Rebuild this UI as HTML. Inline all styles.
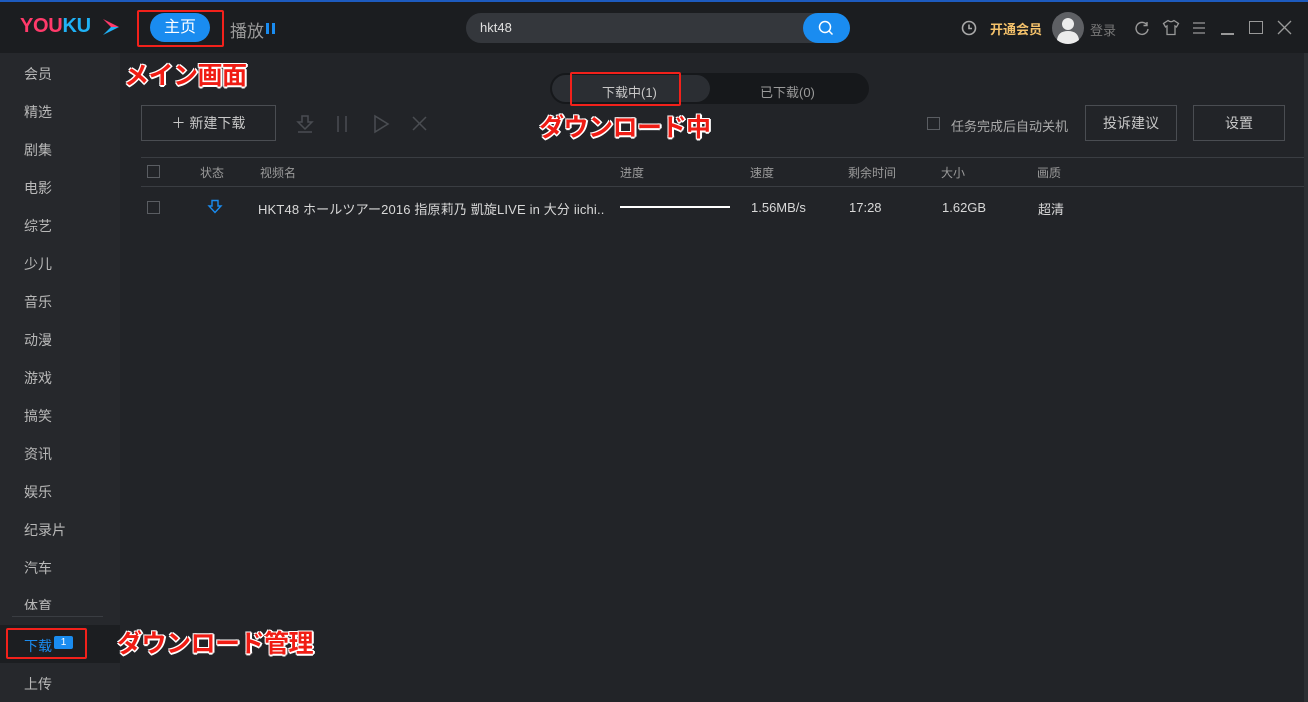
<!DOCTYPE html>
<html><head><meta charset="utf-8"><style>
*{margin:0;padding:0;box-sizing:border-box}
body{width:1308px;height:702px;overflow:hidden;background:#222428;font-family:"Liberation Sans","Noto Sans CJK SC",sans-serif;color:#c8c8c8;position:relative}
.a{position:absolute;white-space:nowrap}
.top{left:0;top:0;width:1308px;height:53px;background:#1b1d20;border-top:2px solid #1d5bbf}
.side{left:0;top:53px;width:120px;height:649px;background:#26282c}
.si{position:absolute;left:24px;font-size:14px;color:#b8b8b8}
.red{position:absolute;border:2px solid #f2211b;border-radius:2px}
.ann{position:absolute;font-size:25px;font-weight:bold;color:#f01c14;font-family:"Noto Sans CJK JP",sans-serif;text-shadow:-1px -1px 0 #fff,1px -1px 0 #fff,-1px 1px 0 #fff,1px 1px 0 #fff,0 2px 0 #fff,2px 0 0 #fff;white-space:nowrap;letter-spacing:-0.5px;line-height:30px}
.btn{position:absolute;border:1px solid #4a4d52;font-size:14px;color:#c8c8c8;text-align:center}
.hd{font-size:12px;color:#9a9a9a;top:164px}
.cb{position:absolute;width:13px;height:13px;border:1px solid #5a5d62}
.row{font-size:13px;color:#d8d8d8;top:200px}
</style></head><body>
<div class="a top"></div>
<div class="a" style="left:20px;top:15px;font-size:20px;font-weight:bold;letter-spacing:-0.3px"><span style="color:#ff3a6a">YOU</span><span style="color:#1fb2f6">KU</span></div>
<svg class="a" style="left:101px;top:17px" width="20" height="20" viewBox="0 0 20 20"><path d="M2 2 L18 10 L10 10 Z" fill="#ff3a6a"/><path d="M10 10 L18 10 L2 18 Z" fill="#1fb2f6"/></svg>
<div class="a" style="left:150px;top:13px;width:60px;height:29px;border-radius:15px;background:#1a8cf0;color:#fff;font-size:16px;text-align:center;line-height:29px">主页</div>
<div class="red" style="left:137px;top:10px;width:87px;height:37px"></div>
<div class="a" style="left:230px;top:17px;font-size:17px;color:#9a9a9a">播放</div>
<div class="a" style="left:266px;top:23px;width:3px;height:11px;background:#1a8cf0"></div>
<div class="a" style="left:272px;top:23px;width:3px;height:11px;background:#1a8cf0"></div>
<div class="a" style="left:466px;top:13px;width:384px;height:30px;border-radius:15px;background:#34373c"></div>
<div class="a" style="left:480px;top:20px;font-size:13px;color:#e0e0e0">hkt48</div>
<div class="a" style="left:803px;top:13px;width:47px;height:30px;border-radius:15px;background:#1a8cf0"></div>
<svg class="a" style="left:818px;top:20px" width="16" height="16"><circle cx="7" cy="7" r="5.5" stroke="#fff" stroke-width="1.5" fill="none"/><path d="M11 11 L14.5 14.5" stroke="#fff" stroke-width="1.5"/></svg>
<svg class="a" style="left:961px;top:20px" width="16" height="16"><circle cx="8" cy="8" r="6.5" stroke="#aaa" stroke-width="1.6" fill="none"/><path d="M8 4.5 V8.5 H11" stroke="#aaa" stroke-width="1.6" fill="none"/></svg>
<div class="a" style="left:990px;top:19px;font-size:13px;font-weight:bold;color:#f5c26b">开通会员</div>
<svg class="a" style="left:1052px;top:12px" width="32" height="32"><circle cx="16" cy="16" r="16" fill="#5e6064"/><circle cx="16" cy="12" r="6" fill="#ececec"/><path d="M5 28 Q6 19 16 19 Q26 19 27 28 Q22 32 16 32 Q10 32 5 28Z" fill="#ececec"/></svg>
<div class="a" style="left:1090px;top:20px;font-size:13px;color:#777">登录</div>
<svg class="a" style="left:1134px;top:20px" width="16" height="16"><path d="M13 5 A6 6 0 1 0 14 9" stroke="#999" stroke-width="1.4" fill="none"/><path d="M13 2 V5.5 H9.5" stroke="#999" stroke-width="1.4" fill="none"/></svg>
<svg class="a" style="left:1162px;top:19px" width="18" height="17"><path d="M6 1.5 L1.5 4.5 L3.5 8 L5 7 V15.5 H13 V7 L14.5 8 L16.5 4.5 L12 1.5 Q9 4 6 1.5Z" stroke="#999" stroke-width="1.3" fill="none"/></svg>
<svg class="a" style="left:1191px;top:20px" width="16" height="16"><path d="M2 3H14M2 8H14M2 13H14" stroke="#999" stroke-width="1.3"/></svg>
<div class="a" style="left:1221px;top:33px;width:13px;height:1.5px;background:#999"></div>
<div class="a" style="left:1249px;top:21px;width:14px;height:13px;border:1.5px solid #999"></div>
<svg class="a" style="left:1277px;top:20px" width="15" height="15"><path d="M1 1L14 14M14 1L1 14" stroke="#999" stroke-width="1.3"/></svg>
<div class="a" style="left:1304px;top:53px;width:4px;height:649px;background:#2c2f33"></div>

<div class="a side"></div>
<div class="si" style="top:64px">会员</div>
<div class="si" style="top:102px">精选</div>
<div class="si" style="top:140px">剧集</div>
<div class="si" style="top:178px">电影</div>
<div class="si" style="top:216px">综艺</div>
<div class="si" style="top:254px">少儿</div>
<div class="si" style="top:292px">音乐</div>
<div class="si" style="top:330px">动漫</div>
<div class="si" style="top:368px">游戏</div>
<div class="si" style="top:406px">搞笑</div>
<div class="si" style="top:444px">资讯</div>
<div class="si" style="top:482px">娱乐</div>
<div class="si" style="top:520px">纪录片</div>
<div class="si" style="top:558px">汽车</div>
<div class="si" style="top:596px;height:14px;overflow:hidden">体育</div>
<div class="a" style="left:12px;top:616px;width:91px;height:1px;background:#3a3d42"></div>
<div class="a" style="left:0;top:625px;width:120px;height:38px;background:#1c1e21"></div>
<div class="si" style="top:636px;color:#1a8cf0">下载</div>
<div class="a" style="left:54px;top:636px;width:19px;height:13px;background:#1a8cf0;border-radius:2px;color:#fff;font-size:10px;text-align:center;line-height:13px">1</div>
<div class="red" style="left:6px;top:628px;width:81px;height:31px"></div>
<div class="si" style="top:674px">上传</div>
<div class="ann" style="left:117px;top:627px">ダウンロード管理</div>
<div class="ann" style="left:124px;top:59px">メイン画面</div>

<div class="a" style="left:550px;top:73px;width:319px;height:31px;border-radius:16px;background:#16181b"></div>
<div class="a" style="left:552px;top:75px;width:158px;height:27px;border-radius:14px;background:#2b2e33"></div>
<div class="a" style="left:602px;top:82px;font-size:13px;color:#c8c8c8">下载中(1)</div>
<div class="a" style="left:760px;top:82px;font-size:13px;color:#9a9a9a">已下载(0)</div>
<div class="red" style="left:570px;top:72px;width:111px;height:34px"></div>
<div class="ann" style="left:539px;top:111px">ダウンロード中</div>

<div class="btn" style="left:141px;top:105px;width:135px;height:36px;line-height:34px">＋ 新建下载</div>
<svg class="a" style="left:295px;top:114px" width="20" height="20"><path d="M7 2H13V8H17L10 15L3 8H7Z" stroke="#4a4d52" stroke-width="1.5" fill="none"/><path d="M3 18H17" stroke="#4a4d52" stroke-width="1.5"/></svg>
<svg class="a" style="left:334px;top:114px" width="16" height="20"><path d="M4 2V18M12 2V18" stroke="#4a4d52" stroke-width="1.5"/></svg>
<svg class="a" style="left:372px;top:114px" width="18" height="20"><path d="M3 2L16 10L3 18Z" stroke="#4a4d52" stroke-width="1.5" fill="none"/></svg>
<svg class="a" style="left:411px;top:115px" width="18" height="18"><path d="M2 2L15 15M15 2L2 15" stroke="#4a4d52" stroke-width="1.5"/></svg>
<div class="cb" style="left:927px;top:117px"></div>
<div class="a" style="left:951px;top:116px;font-size:13px;color:#aaa">任务完成后自动关机</div>
<div class="btn" style="left:1085px;top:105px;width:92px;height:36px;line-height:34px">投诉建议</div>
<div class="btn" style="left:1193px;top:105px;width:92px;height:36px;line-height:34px">设置</div>

<div class="a" style="left:141px;top:157px;width:1163px;height:1px;background:#3a3d42"></div>
<div class="a" style="left:141px;top:186px;width:1163px;height:1px;background:#3a3d42"></div>
<div class="cb" style="left:147px;top:165px"></div>
<div class="a hd" style="left:200px">状态</div>
<div class="a hd" style="left:260px">视频名</div>
<div class="a hd" style="left:620px">进度</div>
<div class="a hd" style="left:750px">速度</div>
<div class="a hd" style="left:848px">剩余时间</div>
<div class="a hd" style="left:941px">大小</div>
<div class="a hd" style="left:1037px">画质</div>
<div class="cb" style="left:147px;top:201px"></div>
<svg class="a" style="left:207px;top:199px" width="16" height="16"><path d="M5 1.5H11V7H14L8 13.5L2 7H5Z" stroke="#1a8cf0" stroke-width="1.4" fill="none"/></svg>
<div class="a row" style="left:258px;top:199px;letter-spacing:0.15px">HKT48 ホールツアー2016 指原莉乃 凱旋LIVE in 大分 iichi..</div>
<div class="a" style="left:620px;top:206px;width:110px;height:2px;background:#fff"></div>
<div class="a row" style="left:751px">1.56MB/s</div>
<div class="a row" style="left:849px">17:28</div>
<div class="a row" style="left:942px">1.62GB</div>
<div class="a row" style="left:1038px;top:199px">超清</div>
</body></html>
